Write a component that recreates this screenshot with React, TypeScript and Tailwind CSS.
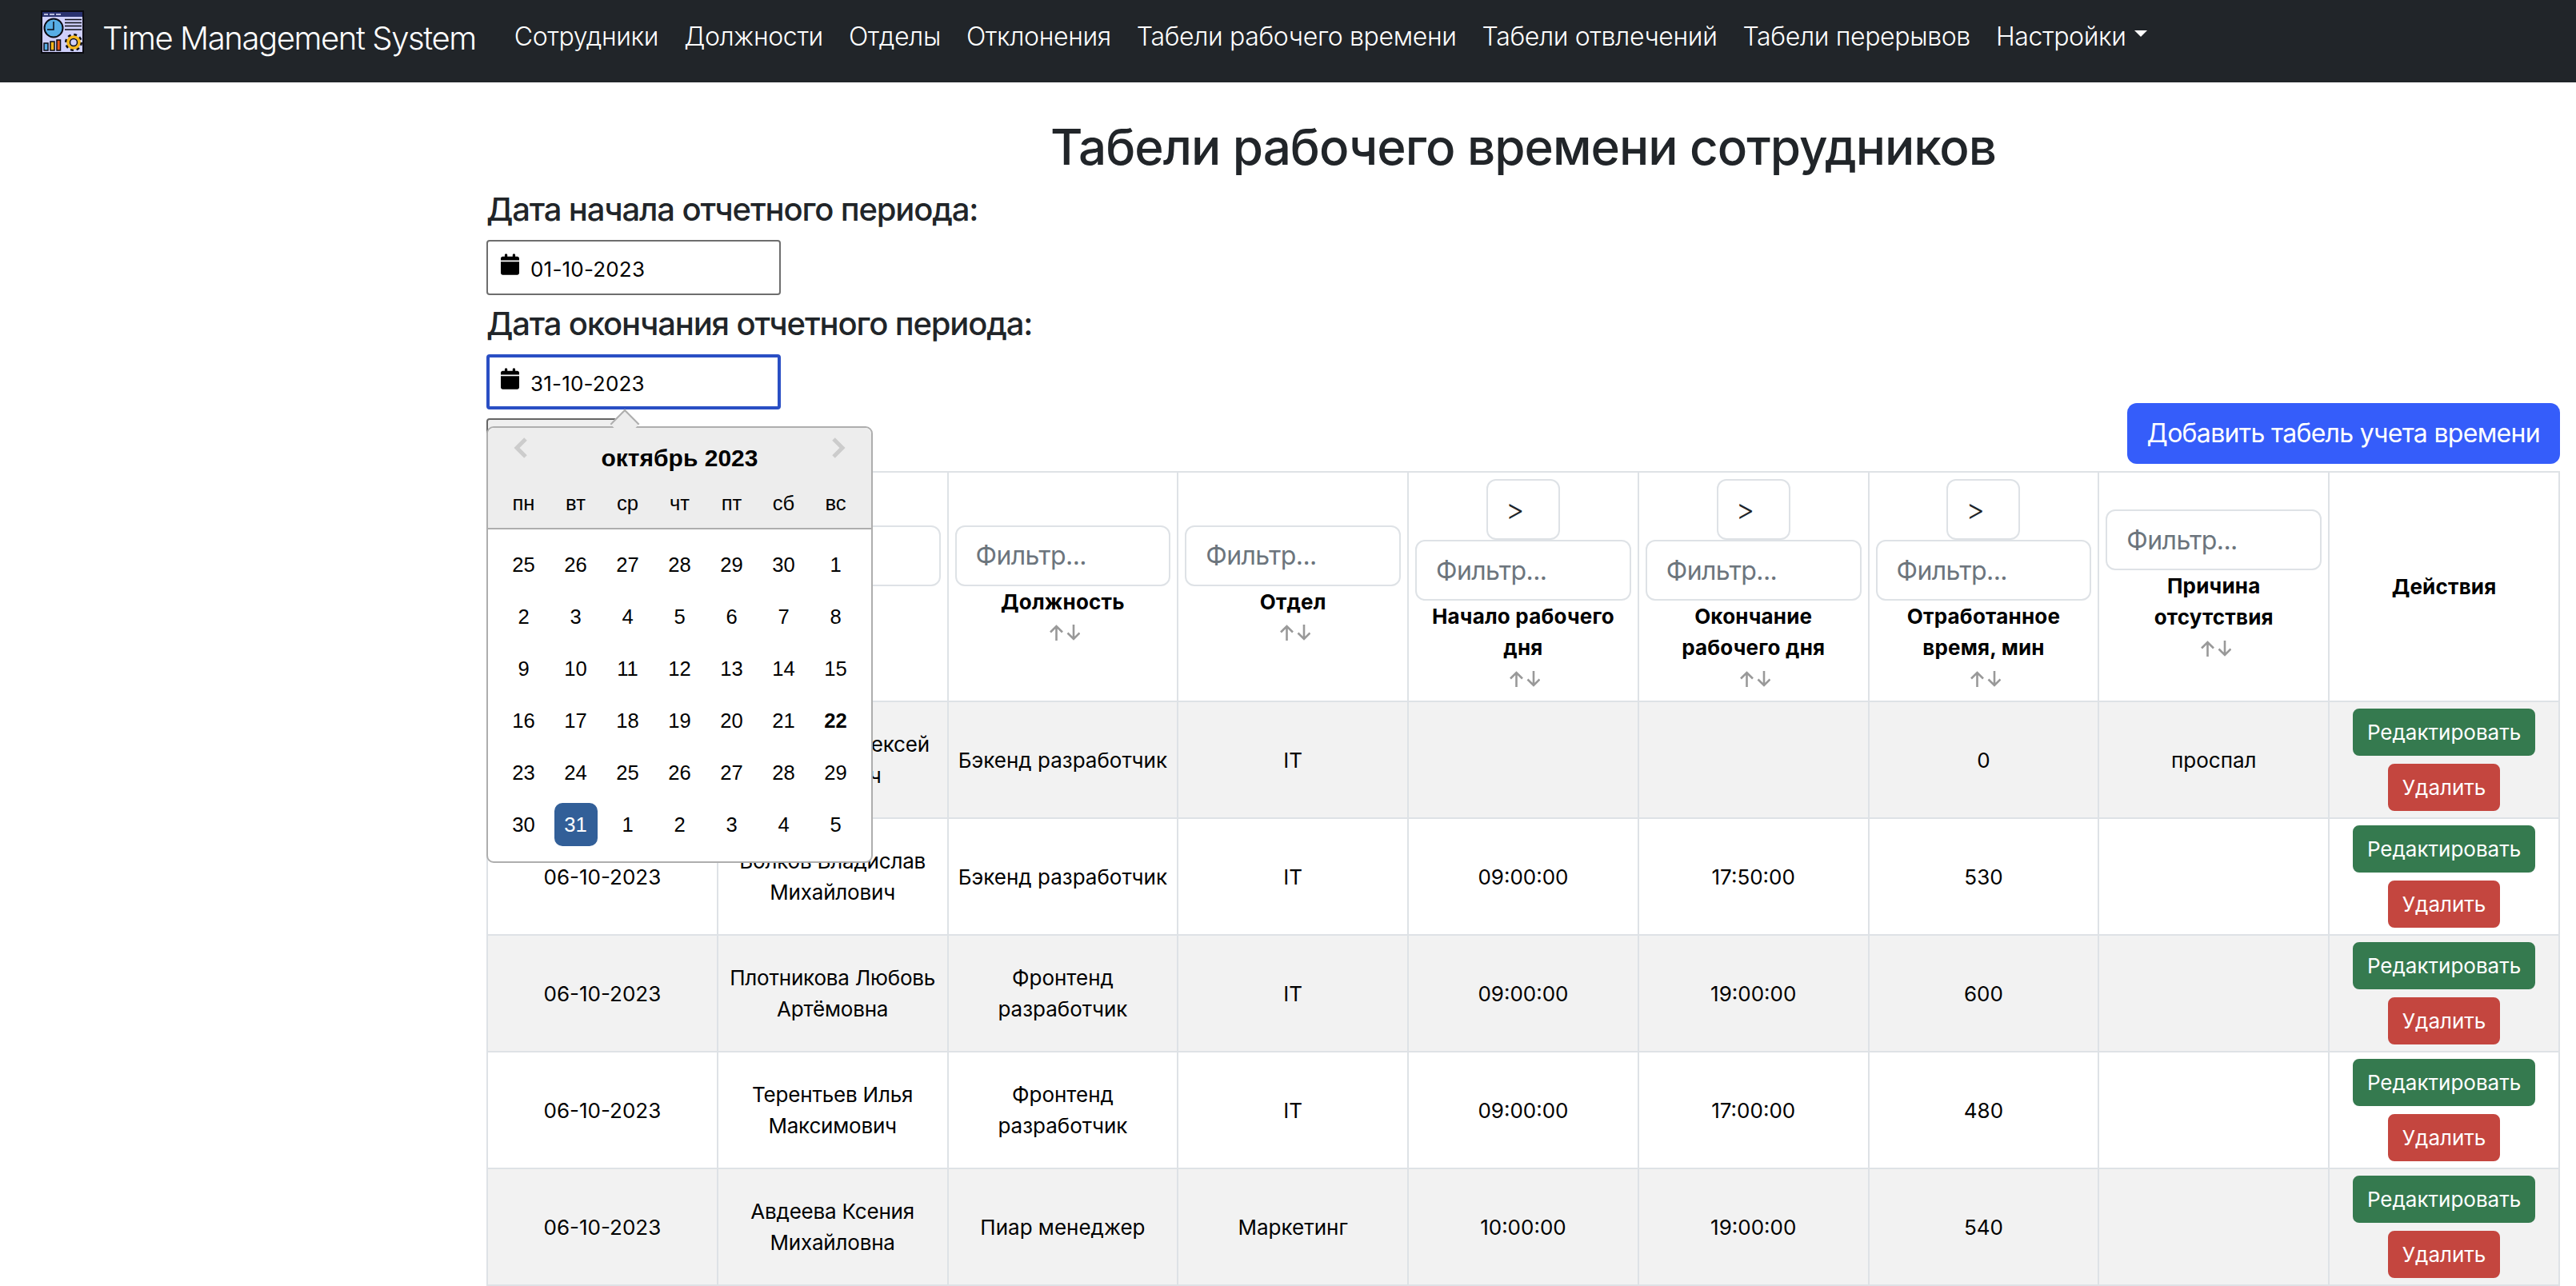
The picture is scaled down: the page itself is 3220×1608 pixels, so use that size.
import { ReactNode } from "react";

const navLinks = [
  "Сотрудники",
  "Должности",
  "Отделы",
  "Отклонения",
  "Табели рабочего времени",
  "Табели отвлечений",
  "Табели перерывов",
];

const rows = [
  { date: "06-10-2023", name: "Григорьев Алексей Петрович", position: "Бэкенд разработчик", dept: "IT", start: "", end: "", worked: "0", reason: "проспал" },
  { date: "06-10-2023", name: "Волков Владислав Михайлович", position: "Бэкенд разработчик", dept: "IT", start: "09:00:00", end: "17:50:00", worked: "530", reason: "" },
  { date: "06-10-2023", name: "Плотникова Любовь Артёмовна", position: "Фронтенд разработчик", dept: "IT", start: "09:00:00", end: "19:00:00", worked: "600", reason: "" },
  { date: "06-10-2023", name: "Терентьев Илья Максимович", position: "Фронтенд разработчик", dept: "IT", start: "09:00:00", end: "17:00:00", worked: "480", reason: "" },
  { date: "06-10-2023", name: "Авдеева Ксения Михайловна", position: "Пиар менеджер", dept: "Маркетинг", start: "10:00:00", end: "19:00:00", worked: "540", reason: "" },
];

const weekDays = ["пн", "вт", "ср", "чт", "пт", "сб", "вс"];
const days = [
  25, 26, 27, 28, 29, 30, 1, 2, 3, 4, 5, 6, 7, 8, 9, 10, 11, 12, 13, 14, 15, 16, 17, 18, 19, 20, 21, 22, 23, 24, 25, 26, 27, 28, 29, 30, 31, 1, 2, 3, 4, 5,
];

function Logo() {
  return (
    <svg viewBox="0 0 54 54" className="w-[54px] h-[54px] shrink-0">
      <rect x="1" y="1" width="52" height="52" fill="#cfd0fb" stroke="#0b0b12" strokeWidth="2" />
      <rect x="2" y="2" width="50" height="6" fill="#2a3270" />
      <path d="M4 5h5M11 5h6M19 5h6" stroke="#e8e8ff" strokeWidth="1.5" />
      <circle cx="16" cy="22" r="11.5" fill="#57aee6" stroke="#0b0b12" strokeWidth="2" />
      <path d="M16 14v10H8" fill="none" stroke="#0b0b12" strokeWidth="1.5" />
      <path d="M30 11.5h21M30 15.5h21M30 19.5h21M30 24h21" stroke="#0b0b12" strokeWidth="1.5" />
      <rect x="4" y="41" width="5" height="9" fill="#57aee6" stroke="#0b0b12" strokeWidth="1.5" />
      <rect x="12" y="39" width="5" height="11" fill="#f6b81c" stroke="#0b0b12" strokeWidth="1.5" />
      <rect x="20" y="37" width="4.5" height="13" fill="#e8591c" stroke="#0b0b12" strokeWidth="1.5" />
      <circle cx="41" cy="40" r="8.5" fill="none" stroke="#0b0b12" strokeWidth="5" strokeDasharray="3.4 3.27" />
      <circle cx="41" cy="40" r="7" fill="none" stroke="#f6b81c" strokeWidth="3.5" />
      <circle cx="41" cy="40" r="4.5" fill="#cfd0fb" stroke="#0b0b12" strokeWidth="1.5" />
    </svg>
  );
}

function CalendarIcon() {
  return (
    <svg viewBox="0 0 448 512" className="w-[23px] h-[27px] shrink-0 fill-black">
      <path d="M96 32V64H48C21.5 64 0 85.5 0 112v48H448V112c0-26.5-21.5-48-48-48H352V32c0-17.7-14.3-32-32-32s-32 14.3-32 32V64H160V32c0-17.7-14.3-32-32-32S96 14.3 96 32zM448 192H0V464c0 26.5 21.5 48 48 48H400c26.5 0 48-21.5 48-48V192z" />
    </svg>
  );
}

function DateInput({ value, focused }: { value: string; focused?: boolean }) {
  return (
    <div
      className={
        focused
          ? "w-[368px] h-[69px] rounded-[4px] border-[4px] border-[#2a4fc4] flex items-start pl-[14px] pt-[13px] gap-[14px] bg-white"
          : "w-[368px] h-[69px] rounded-[4px] border-2 border-[#6e6e6e] flex items-start pl-[16px] pt-[15px] gap-[14px] bg-white"
      }
    >
      <CalendarIcon />
      <span className="text-[26px] leading-[39px] tracking-[0.2px] text-black">{value}</span>
    </div>
  );
}

function SortArrows() {
  return (
    <div className="h-[39px] flex items-center justify-center text-[#999999] pl-[5px]">
      <svg viewBox="0 0 38 20" className="w-[38px] h-[20px]" fill="none" stroke="currentColor" strokeWidth="2.6">
        <path d="M8.5 20V2M1 9.5l7.5-7.5L16 9.5" />
        <path d="M30 0v18M22.5 10.5L30 18l7.5-7.5" />
      </svg>
    </div>
  );
}

function HeaderCell({ title, filter, compare, sort }: { title: string; filter?: boolean; compare?: boolean; sort?: boolean }) {
  return (
    <th className="border-2 border-[#dee2e6] p-2 align-middle text-center font-bold tracking-[0.2px]">
      {compare && (
        <button className="block mx-auto w-[92px] h-[76px] rounded-xl border-2 border-[#dee2e6] bg-white pl-[22px] text-left text-[36px] font-light text-[#212529]">
          &gt;
        </button>
      )}
      {filter && (
        <input
          placeholder="Фильтр..."
          className="block w-full h-[76px] rounded-xl border-2 border-[#dee2e6] bg-white px-[24px] text-[32px] font-normal tracking-[-0.6px] placeholder:text-[#6c757d]"
        />
      )}
      <div>{title}</div>
      {sort && <SortArrows />}
    </th>
  );
}

function Cell({ children }: { children?: ReactNode }) {
  return <td className="border-2 border-[#dee2e6] p-2 align-middle text-center">{children}</td>;
}

function DatePopup() {
  return (
    <div className="absolute left-0 top-[90px] z-10 w-[483px] h-[546px] rounded-[9px] border-2 border-[#aeaeae] bg-white font-['Liberation_Sans',sans-serif] text-black">
      <div className="absolute left-[158px] top-[-18px] w-[26px] h-[26px] rotate-45 border-t-2 border-l-2 border-[#aeaeae] bg-[#ededed]" />
      <div className="relative h-[127px] rounded-t-[8px] border-b-2 border-[#aeaeae] bg-[#ededed]">
        <svg viewBox="0 0 18 26" className="absolute left-[32px] top-[12px] w-[18px] h-[26px]" fill="none" stroke="#cccccc" strokeWidth="5">
          <path d="M15 2L4 13l11 11" />
        </svg>
        <svg viewBox="0 0 18 26" className="absolute right-[32px] top-[12px] w-[18px] h-[26px]" fill="none" stroke="#cccccc" strokeWidth="5">
          <path d="M3 2l11 11L3 24" />
        </svg>
        <div className="pt-[20px] text-center text-[30px] leading-[36px] font-bold">октябрь 2023</div>
        <div className="mt-[11px] px-[12px] grid grid-cols-7 text-center text-[25.6px] leading-[54px]">
          {weekDays.map((d) => (
            <div key={d}>{d}</div>
          ))}
        </div>
      </div>
      <div className="px-[12px] pt-[17px] grid grid-cols-7 text-center text-[25.6px] leading-[54px] gap-y-[11px]">
        {days.map((d, i) => (
          <div key={i} className="flex justify-center">
            <div
              className={
                i === 36
                  ? "w-[54px] h-[54px] rounded-[10px] bg-[#325f98] text-white"
                  : i === 27
                  ? "w-[54px] h-[54px] font-bold"
                  : "w-[54px] h-[54px]"
              }
            >
              {d}
            </div>
          </div>
        ))}
      </div>
    </div>
  );
}

export default function App() {
  return (
    <div className="h-screen overflow-hidden bg-white font-[Inter,sans-serif] text-[26px] leading-[39px] text-black">
      {/* navbar */}
      <nav className="h-[103px] bg-[#212529] flex items-start pl-[51px] text-white">
        <div className="mt-[13px]">
          <Logo />
        </div>
        <div className="ml-[23px] mt-[18px] text-[40px] leading-[60px] font-light tracking-[-1.4px]">Time Management System</div>
        <div className="ml-[48px] mt-[22px] flex gap-[32px] text-[32px] leading-[48px] font-light tracking-[-0.36px]">
          {navLinks.map((l) => (
            <span key={l}>{l}</span>
          ))}
          <span className="flex items-start">
            Настройки
            <span className="ml-[10px] mt-[16px] w-0 h-0 border-x-[8px] border-x-transparent border-t-[8px] border-t-white" />
          </span>
        </div>
      </nav>

      <main className="pl-[608px] pr-[20px]">
        <h1 className="pt-[42px] h-[135px] text-center text-[62px] leading-[77px] font-medium tracking-[-1px] text-[#212529]">
          Табели рабочего времени сотрудников
        </h1>

        <h5 className="text-[40px] leading-[48px] font-medium tracking-[-1.15px] text-[#212529]">Дата начала отчетного периода:</h5>
        <div className="mt-[14px]">
          <DateInput value="01-10-2023" />
        </div>
        <h5 className="mt-[12px] text-[40px] leading-[48px] font-medium tracking-[-1.15px] text-[#212529]">Дата окончания отчетного периода:</h5>
        <div className="relative mt-[14px]">
          <DateInput value="31-10-2023" focused />
          <DatePopup />
        </div>

        <div className="flex justify-between items-start h-[85px] -mt-[8px]">
          <div className="mt-[19px] w-[166px] h-[60px] rounded-[4px] border-2 border-[#666666] bg-[#efefef]" />
          <button className="h-[76px] rounded-xl bg-[#355dfa] px-[25px] text-[32px] leading-[48px] tracking-[-0.7px] text-white">
            Добавить табель учета времени
          </button>
        </div>

        <table className="w-full table-fixed border-collapse">
          <thead>
            <tr>
              <HeaderCell title="Дата" filter compare sort />
              <HeaderCell title="ФИО" filter sort />
              <HeaderCell title="Должность" filter sort />
              <HeaderCell title="Отдел" filter sort />
              <HeaderCell title="Начало рабочего дня" filter compare sort />
              <HeaderCell title="Окончание рабочего дня" filter compare sort />
              <HeaderCell title="Отработанное время, мин" filter compare sort />
              <HeaderCell title="Причина отсутствия" filter sort />
              <HeaderCell title="Действия" />
            </tr>
          </thead>
          <tbody>
            {rows.map((r, i) => (
              <tr key={i} className={i % 2 === 0 ? "bg-[#f2f2f2]" : "bg-white"}>
                <Cell>{r.date}</Cell>
                <Cell>
                  <span className="tracking-[-0.2px]">{r.name}</span>
                </Cell>
                <Cell>{r.position}</Cell>
                <Cell>{r.dept}</Cell>
                <Cell>{r.start}</Cell>
                <Cell>{r.end}</Cell>
                <Cell>{r.worked}</Cell>
                <Cell>{r.reason}</Cell>
                <Cell>
                  <button className="block mx-auto rounded-lg border-2 border-[#357a4f] bg-[#357a4f] px-4 py-2 text-white">
                    Редактировать
                  </button>
                  <button className="block mx-auto mt-[10px] rounded-lg border-2 border-[#c4463f] bg-[#c4463f] px-4 py-2 text-white">
                    Удалить
                  </button>
                </Cell>
              </tr>
            ))}
          </tbody>
        </table>
      </main>
    </div>
  );
}
